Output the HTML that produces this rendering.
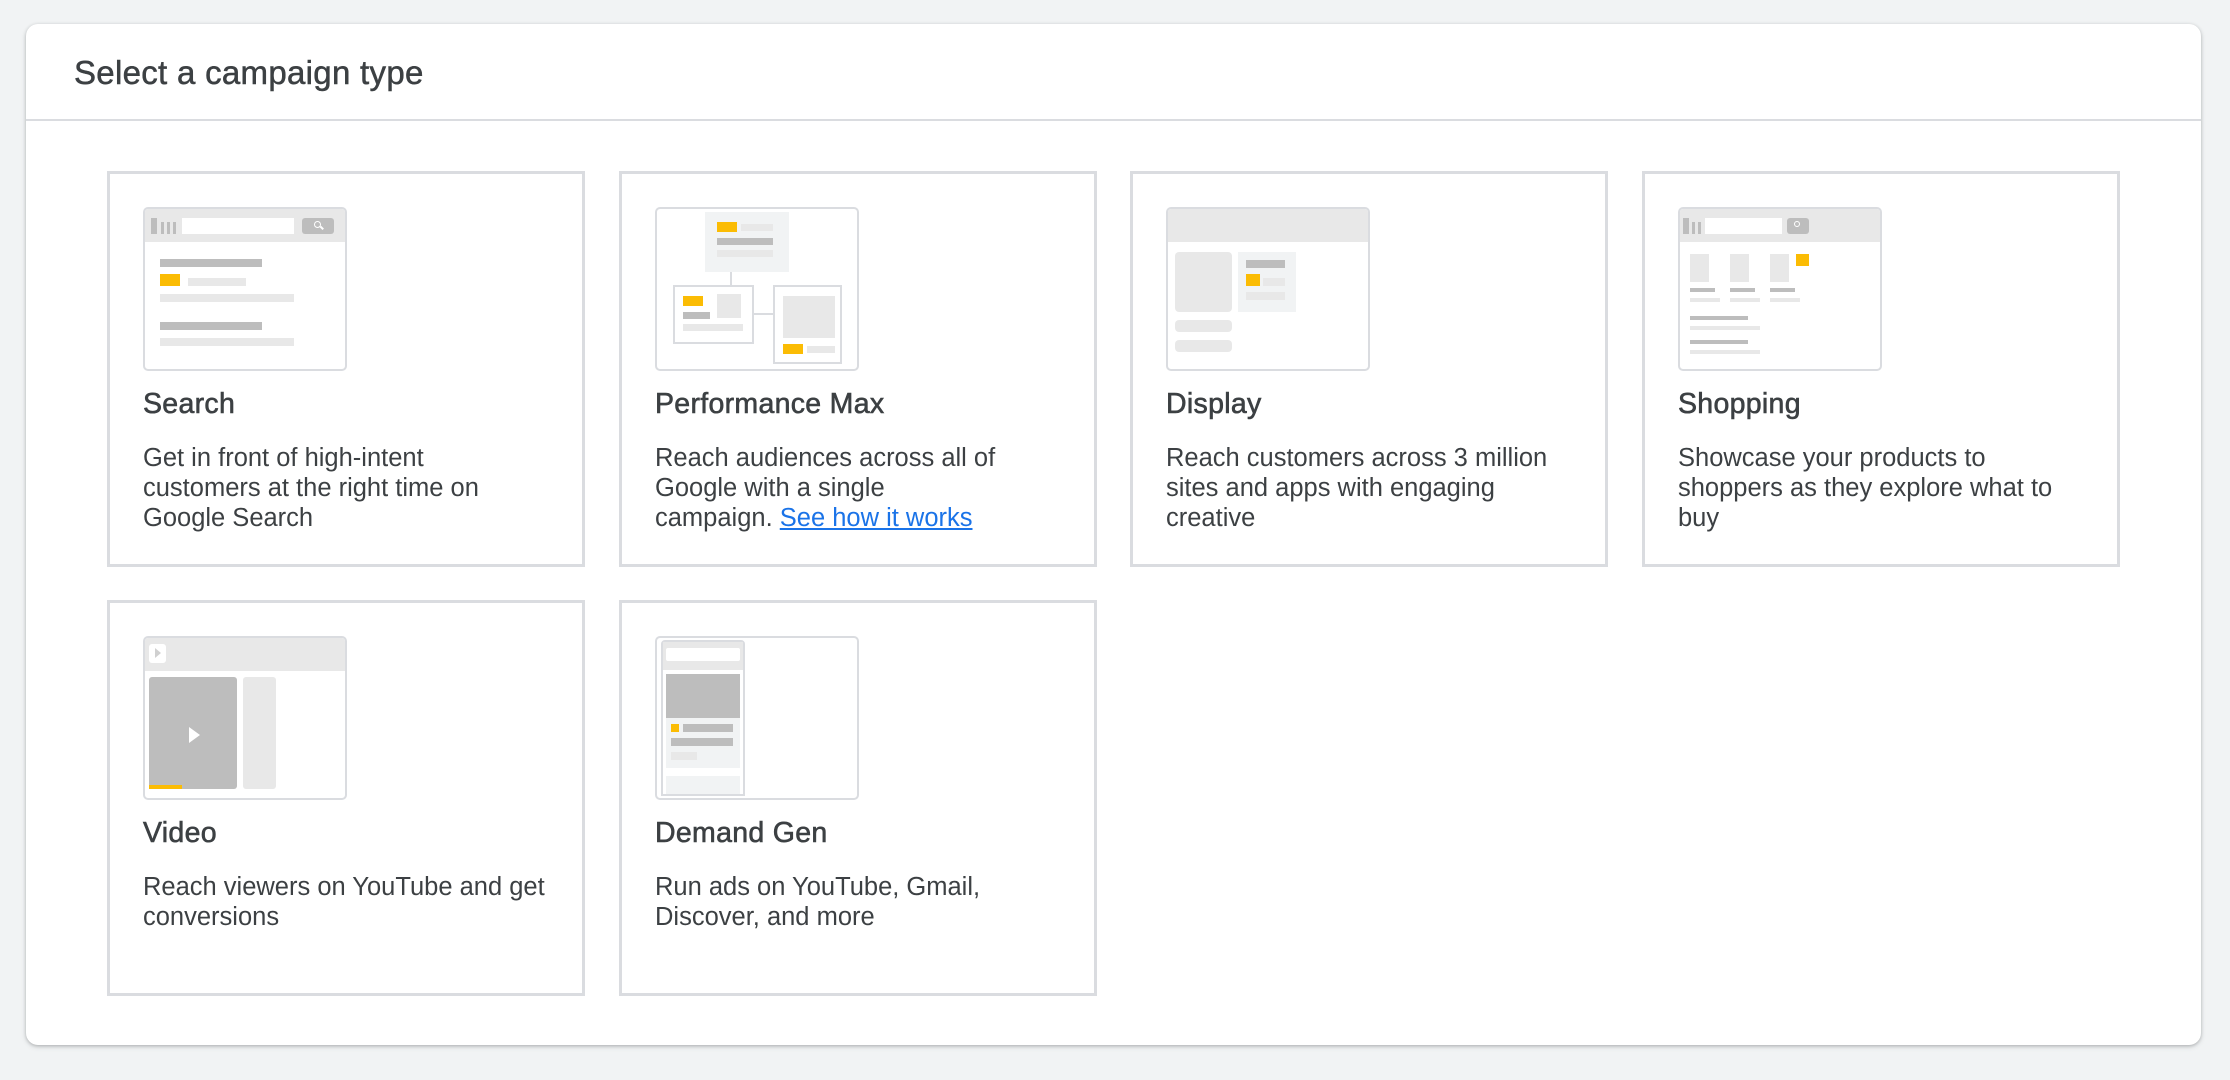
<!DOCTYPE html>
<html><head><meta charset="utf-8"><style>
*{margin:0;padding:0;box-sizing:border-box}
body{width:2230px;height:1080px;background:#f1f3f4;font-family:"Liberation Sans",Arial,sans-serif;position:relative;overflow:hidden;color:#3c4043}
.panel{position:absolute;left:26px;top:24px;width:2175px;height:1021px;background:#fff;border-radius:12px;box-shadow:0 1px 3px rgba(60,64,67,.3),0 2px 6px rgba(60,64,67,.12)}
.hdr{position:absolute;left:0;top:0;width:100%;height:97px;border-bottom:2px solid #dadce0}
.hdr h1{position:absolute;left:48px;top:30px;font-size:33px;font-weight:normal;color:#3c4043;-webkit-text-stroke:.5px #3c4043;letter-spacing:.3px}
.card{position:absolute;width:478px;height:396px;border:3px solid #dadce0;background:#fff}
.ill{position:absolute;left:33px;top:33px;width:204px;height:164px;border:2px solid #dadce0;border-radius:5px;overflow:hidden}
.ill div{position:absolute}
.t{position:absolute;left:33px;top:214px;font-size:28.5px;color:#3c4043;-webkit-text-stroke:.6px #3c4043;letter-spacing:.3px}
.d{position:absolute;left:33px;top:269px;white-space:nowrap;font-size:25.5px;line-height:30px;color:#3c4043}
.d a{color:#1a73e8;text-decoration:underline}
.hd{left:0;top:0;width:204px;height:33px;background:#e8e8e8}
.dk{background:#bdbdbd}.lt{background:#e8e8e8}.y{background:#fbbc04}.bg{background:#f1f3f4}.w{background:#fff}
</style></head><body>
<div class="panel"><div class="hdr"><h1>Select a campaign type</h1></div></div>

<!-- Search -->
<div class="card" style="left:107px;top:171px">
 <div class="ill">
  <div class="hd"></div>
  <div class="dk" style="left:6px;top:9px;width:6px;height:16px"></div>
  <div class="dk" style="left:16px;top:13px;width:3px;height:12px"></div>
  <div class="dk" style="left:22px;top:13px;width:3px;height:12px"></div>
  <div class="dk" style="left:28px;top:13px;width:3px;height:12px"></div>
  <div class="w" style="left:37px;top:9px;width:112px;height:16px"></div>
  <div class="dk" style="left:157px;top:9px;width:32px;height:16px;border-radius:3px"></div>
  <div style="left:169px;top:12px;width:7px;height:7px;border:1.5px solid #fff;border-radius:50%"></div>
  <div style="left:175px;top:18px;width:4px;height:1.5px;background:#fff;transform:rotate(45deg)"></div>
  <div class="dk" style="left:15px;top:50px;width:102px;height:8px"></div>
  <div class="y" style="left:15px;top:65px;width:20px;height:12px"></div>
  <div class="lt" style="left:43px;top:69px;width:58px;height:8px"></div>
  <div class="lt" style="left:15px;top:85px;width:134px;height:8px"></div>
  <div class="dk" style="left:15px;top:113px;width:102px;height:8px"></div>
  <div class="lt" style="left:15px;top:129px;width:134px;height:8px"></div>
 </div>
 <div class="t">Search</div>
 <div class="d">Get in front of high-intent<br>customers at the right time on<br>Google Search</div>
</div>

<!-- Performance Max -->
<div class="card" style="left:619px;top:171px">
 <div class="ill">
  <div class="bg" style="left:48px;top:3px;width:84px;height:60px"></div>
  <div class="y" style="left:60px;top:13px;width:20px;height:10px"></div>
  <div class="lt" style="left:84px;top:15px;width:32px;height:7px"></div>
  <div class="dk" style="left:60px;top:29px;width:56px;height:7px"></div>
  <div class="lt" style="left:60px;top:41px;width:56px;height:7px"></div>
  <div style="left:73px;top:63px;width:2px;height:13px;background:#dadce0"></div>
  <div style="left:16px;top:76px;width:81px;height:59px;border:2px solid #dadce0"></div>
  <div class="y" style="left:26px;top:87px;width:20px;height:10px"></div>
  <div class="lt" style="left:60px;top:85px;width:24px;height:24px"></div>
  <div class="dk" style="left:26px;top:103px;width:27px;height:7px"></div>
  <div class="lt" style="left:26px;top:115px;width:60px;height:7px"></div>
  <div style="left:97px;top:104px;width:19px;height:2px;background:#dadce0"></div>
  <div style="left:116px;top:76px;width:69px;height:79px;border:2px solid #dadce0"></div>
  <div class="lt" style="left:126px;top:87px;width:52px;height:42px"></div>
  <div class="y" style="left:126px;top:135px;width:20px;height:10px"></div>
  <div class="lt" style="left:150px;top:137px;width:28px;height:7px"></div>
 </div>
 <div class="t">Performance Max</div>
 <div class="d">Reach audiences across all of<br>Google with a single<br>campaign. <a>See how it works</a></div>
</div>

<!-- Display -->
<div class="card" style="left:1130px;top:171px">
 <div class="ill">
  <div class="hd"></div>
  <div class="lt" style="left:7px;top:43px;width:57px;height:60px;border-radius:4px"></div>
  <div class="bg" style="left:70px;top:43px;width:58px;height:60px"></div>
  <div class="dk" style="left:78px;top:51px;width:39px;height:8px"></div>
  <div class="y" style="left:78px;top:65px;width:14px;height:12px"></div>
  <div class="lt" style="left:95px;top:69px;width:22px;height:8px"></div>
  <div class="lt" style="left:78px;top:83px;width:39px;height:8px"></div>
  <div class="lt" style="left:7px;top:111px;width:57px;height:12px;border-radius:4px"></div>
  <div class="lt" style="left:7px;top:131px;width:57px;height:12px;border-radius:4px"></div>
 </div>
 <div class="t">Display</div>
 <div class="d">Reach customers across 3 million<br>sites and apps with engaging<br>creative</div>
</div>

<!-- Shopping -->
<div class="card" style="left:1642px;top:171px">
 <div class="ill">
  <div class="hd"></div>
  <div class="dk" style="left:3px;top:9px;width:6px;height:16px"></div>
  <div class="dk" style="left:12px;top:13px;width:3px;height:12px"></div>
  <div class="dk" style="left:18px;top:13px;width:3px;height:12px"></div>
  <div class="w" style="left:25px;top:9px;width:77px;height:16px"></div>
  <div class="dk" style="left:107px;top:9px;width:22px;height:16px;border-radius:3px"></div>
  <div style="left:114px;top:12px;width:6px;height:6px;border:1.5px solid #fff;border-radius:50%"></div>
  <div class="lt" style="left:10px;top:45px;width:19px;height:28px"></div>
  <div class="lt" style="left:50px;top:45px;width:19px;height:28px"></div>
  <div class="lt" style="left:90px;top:45px;width:19px;height:28px"></div>
  <div class="y" style="left:116px;top:45px;width:13px;height:12px"></div>
  <div class="dk" style="left:10px;top:79px;width:25px;height:4px"></div>
  <div class="dk" style="left:50px;top:79px;width:25px;height:4px"></div>
  <div class="dk" style="left:90px;top:79px;width:25px;height:4px"></div>
  <div class="lt" style="left:10px;top:89px;width:30px;height:4px"></div>
  <div class="lt" style="left:50px;top:89px;width:30px;height:4px"></div>
  <div class="lt" style="left:90px;top:89px;width:30px;height:4px"></div>
  <div class="dk" style="left:10px;top:107px;width:58px;height:4px"></div>
  <div class="lt" style="left:10px;top:117px;width:70px;height:4px"></div>
  <div class="dk" style="left:10px;top:131px;width:58px;height:4px"></div>
  <div class="lt" style="left:10px;top:141px;width:70px;height:4px"></div>
 </div>
 <div class="t">Shopping</div>
 <div class="d">Showcase your products to<br>shoppers as they explore what to<br>buy</div>
</div>

<!-- Video -->
<div class="card" style="left:107px;top:600px">
 <div class="ill">
  <div class="hd"></div>
  <div class="w" style="left:4px;top:6px;width:17px;height:19px;border-radius:3px"></div>
  <div style="left:10px;top:10px;width:0;height:0;border-top:5px solid transparent;border-bottom:5px solid transparent;border-left:6px solid #d0d0d0"></div>
  <div class="dk" style="left:4px;top:39px;width:88px;height:112px;border-radius:3px"></div>
  <div style="left:44px;top:89px;width:0;height:0;border-top:8px solid transparent;border-bottom:8px solid transparent;border-left:11px solid #fff"></div>
  <div class="y" style="left:4px;top:147px;width:33px;height:4px"></div>
  <div class="lt" style="left:98px;top:39px;width:33px;height:112px;border-radius:3px"></div>
 </div>
 <div class="t">Video</div>
 <div class="d">Reach viewers on YouTube and get<br>conversions</div>
</div>

<!-- Demand Gen -->
<div class="card" style="left:619px;top:600px">
 <div class="ill">
  <div style="left:4px;top:2px;width:84px;height:156px;border:2px solid #dadce0;border-radius:4px 4px 0 0;background:#fff"></div>
  <div class="lt" style="left:6px;top:4px;width:80px;height:28px"></div>
  <div class="w" style="left:9px;top:10px;width:74px;height:13px;border-radius:2px"></div>
  <div class="dk" style="left:9px;top:36px;width:74px;height:44px"></div>
  <div class="bg" style="left:9px;top:80px;width:74px;height:50px"></div>
  <div class="y" style="left:14px;top:86px;width:8px;height:8px"></div>
  <div class="dk" style="left:26px;top:86px;width:50px;height:8px"></div>
  <div class="dk" style="left:14px;top:100px;width:62px;height:8px"></div>
  <div class="lt" style="left:14px;top:114px;width:26px;height:8px"></div>
  <div class="bg" style="left:9px;top:138px;width:74px;height:18px"></div>
 </div>
 <div class="t">Demand Gen</div>
 <div class="d">Run ads on YouTube, Gmail,<br>Discover, and more</div>
</div>
</body></html>
